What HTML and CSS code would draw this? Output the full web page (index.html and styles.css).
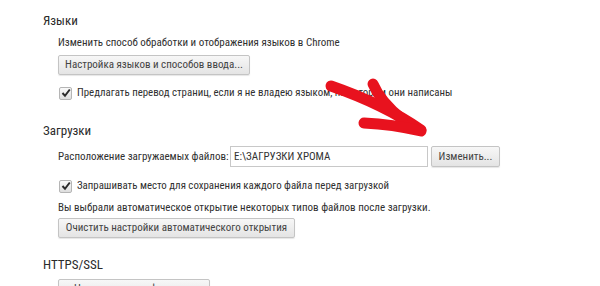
FILE: index.html
```html
<!DOCTYPE html>
<html lang="ru">
<head>
  <meta charset="UTF-8" />
  <title>Настройки</title>
  <link rel="stylesheet" href="styles.css">
</head>
<body>

  <div class="settings">

    <section class="group">
      <h3>Языки</h3>
      <div class="group-body">
        <p class="first">Изменить способ обработки и отображения языков в Chrome</p>
        <button class="btn btn-lang">Настройка языков и способов ввода...</button>
        <label class="check check-lang">
          <span class="box">
            <svg width="10" height="10" viewBox="0 0 10 10"><path d="M1.5 5 L4 7.8 L8.8 1.5" fill="none" stroke="#2b2b2b" stroke-width="2"/></svg>
          </span>
          Предлагать перевод страниц, если я не владею языком, на котором они написаны
        </label>
      </div>
    </section>

    <section class="group group-downloads">
      <h3>Загрузки</h3>
      <div class="group-body">
        <div class="path-row">
          <span>Расположение загружаемых файлов:</span>
          <input type="text" class="path-input" value="E:\ЗАГРУЗКИ ХРОМА">
          <button class="btn btn-change">Изменить...</button>
        </div>
        <label class="check check-ask">
          <span class="box">
            <svg width="10" height="10" viewBox="0 0 10 10"><path d="M1.5 5 L4 7.8 L8.8 1.5" fill="none" stroke="#2b2b2b" stroke-width="2"/></svg>
          </span>
          Запрашивать место для сохранения каждого файла перед загрузкой
        </label>
        <p class="auto-note">Вы выбрали автоматическое открытие некоторых типов файлов после загрузки.</p>
        <button class="btn btn-clear">Очистить настройки автоматического открытия</button>
      </div>
    </section>

    <section class="group group-ssl">
      <h3>HTTPS/SSL</h3>
      <div class="group-body">
        <button class="btn btn-certs">Настроить сертификаты...</button>
      </div>
    </section>

  </div>

  <!-- red marker arrow drawn over the page -->
  <svg class="marker" width="600" height="286" viewBox="0 0 600 286">
    <g fill="none" stroke="#e8121e" stroke-width="11" stroke-linecap="round" stroke-linejoin="round">
      <path d="M331 86 C 360 96, 392 110, 421 130"/>
      <path d="M373 84 C 378 96, 387 107, 402 119"/>
      <path d="M364 123 C 386 124, 404 127, 421 131"/>
    </g>
  </svg>

</body>
</html>
```

FILE: styles.css
```css
body {
  margin: 0;
  background-color: #ffffff;
  font-family: 'Roboto Condensed', 'Roboto', sans-serif;
  font-size: 11px;
  color: #303030;
  overflow: hidden;
  height: 286px;
}

.settings {
  padding: 12px 0 0 43px;
}

.group h3 {
  margin: 0;
  font-size: 13px;
  font-weight: normal;
  line-height: 18px;
  color: #2a2a2a;
}

.group-downloads {
  margin-top: 21px;
}

.group-ssl {
  margin-top: 18px;
}

.group-body {
  padding-left: 15px;
}

.group-body p {
  margin: 0;
  line-height: 16px;
  white-space: nowrap;
}

.first {
  padding-top: 5px;
}

.btn {
  display: block;
  height: 20px;
  padding: 0;
  font-family: inherit;
  font-size: 11px;
  color: #444;
  white-space: nowrap;
  background: linear-gradient(#f7f7f7, #e4e4e4);
  border: 1px solid #c4c4c4;
  border-radius: 2px;
  box-shadow: 0 1px 1px rgba(0, 0, 0, 0.1);
  line-height: 18px;
}

.btn-lang {
  margin-top: 4px;
  width: 192px;
}

.check {
  display: flex;
  align-items: center;
  gap: 5px;
  font-size: 10.85px;
  line-height: 16px;
  white-space: nowrap;
}

.check-lang {
  margin-top: 10px;
}

.box {
  width: 11px;
  height: 11px;
  margin-left: 1px;
  border: 1px solid #b5b5b5;
  border-radius: 2px;
  background: linear-gradient(#fafafa, #dedede);
  display: flex;
  align-items: center;
  justify-content: center;
}

.path-row {
  display: flex;
  align-items: center;
  margin-top: 6px;
  white-space: nowrap;
}

.path-row span {
  width: 168px;
}

.path-input {
  width: 198px;
  height: 21px;
  box-sizing: border-box;
  margin-left: 4px;
  padding: 0 3px;
  border: 1px solid #c8c8c8;
  font-family: inherit;
  font-size: 11px;
  color: #333;
}

.btn-change {
  margin-left: 3px;
  width: 69px;
  height: 21px;
}

.check-ask {
  margin-top: 11px;
}

.auto-note {
  margin-top: 6px !important;
}

.btn-clear {
  margin-top: 2px;
  width: 237px;
}

.btn-certs {
  margin-top: 5px;
  width: 152px;
}

.marker {
  position: absolute;
  left: 0;
  top: 0;
  pointer-events: none;
}
```
